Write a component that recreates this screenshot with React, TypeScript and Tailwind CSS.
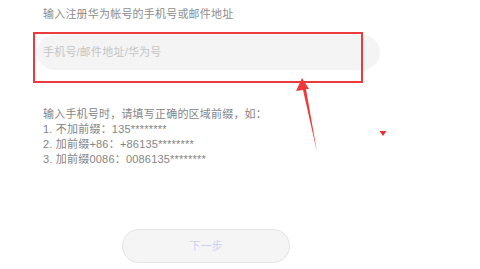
const tips = [
    '输入手机号时，请填写正确的区域前缀，如：',
    '1. 不加前缀：135********',
    '2. 加前缀+86：+86135********',
    '3. 加前缀0086：0086135********',
];

const App = () => {
    return (
        <div
            className="relative w-[480px] h-[269px] overflow-hidden bg-white"
            style={{ fontFamily: '"Liberation Sans", "Noto Sans CJK SC", sans-serif' }}
        >
            <div className="pl-[37px] pt-[7px] flex flex-col">
                <p className="pl-[6px] text-[11px] leading-[14px] tracking-[0.2px] text-[#8c8c8c]">
                    输入注册华为帐号的手机号或邮件地址
                </p>

                <div className="mt-[14px] w-[343px] h-[35px] rounded-full bg-[#f4f4f4] flex items-center pl-[6px]">
                    <span className="text-[11px] tracking-[0.2px] text-[#c4c4c4]">手机号/邮件地址/华为号</span>
                </div>

                <div className="mt-[37px] pl-[6px] flex flex-col text-[11px] leading-[15px] tracking-[0.2px] text-[#858585]">
                    {tips.map((t) => (
                        <p key={t}>{t}</p>
                    ))}
                </div>

                <button className="mt-[62px] ml-[85px] w-[168px] h-[34px] rounded-full border border-[#e4e4e4] bg-[#f5f5f5] text-[11px] text-[#c9d2f0]">
                    下一步
                </button>
            </div>

            {/* annotation: red box */}
            <div className="absolute left-[33px] top-[32px] w-[330px] h-[51px] border-2 border-[#ec3b3d]" />

            {/* annotation: arrow + marker */}
            <svg className="absolute left-0 top-0" width="480" height="269" viewBox="0 0 480 269">
                <polygon points="302,78 309,89 306,89 317,152 303,90 296,91" fill="#f03a3a" />
                <polygon points="379.5,131 386.5,131 383,136" fill="#ec3030" />
            </svg>
        </div>
    );
};

export default App;
